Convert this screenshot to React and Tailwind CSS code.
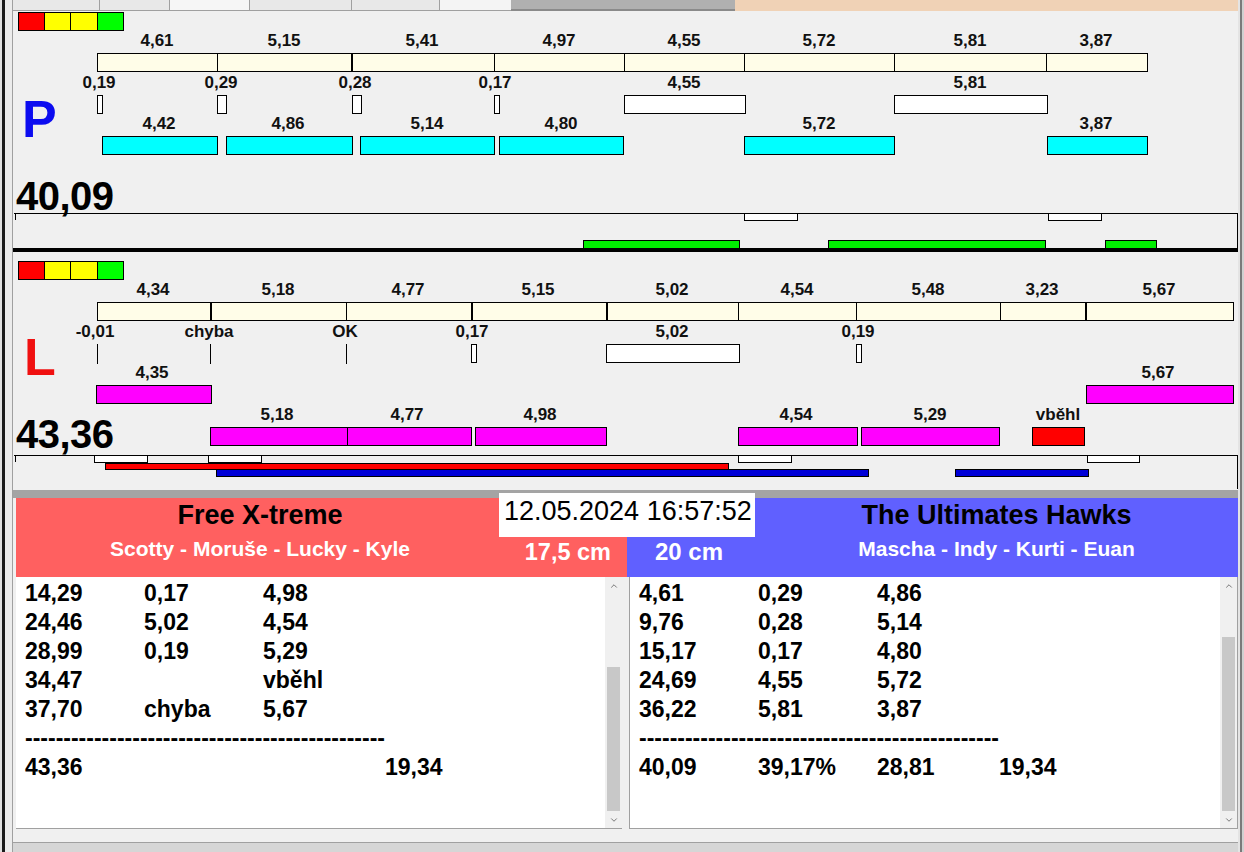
import { ChevronUp, ChevronDown } from "lucide-react";

const X0 = 13;

function Label({ x, y, oy, children }) {
  return (
    <div
      className="absolute -translate-x-1/2 -translate-y-1/2 whitespace-nowrap text-[17px] font-bold leading-none text-[#111]"
      style={{ left: x - X0, top: y - oy }}
    >
      {children}
    </div>
  );
}

function Box({ x0, x1, y0, y1, oy, className = "" }) {
  return (
    <div
      className={"absolute border border-black " + className}
      style={{ left: x0 - X0, top: y0 - oy, width: x1 - x0 + 1, height: y1 - y0 + 1 }}
    />
  );
}

function VLine({ x, y0, y1, oy, w = 1 }) {
  return <div className="absolute bg-black" style={{ left: x - X0, top: y0 - oy, width: w, height: y1 - y0 + 1 }} />;
}

function Squares({ y, oy }) {
  return (
    <>
      <Box x0={18} x1={44} y0={y} y1={y + 18} oy={oy} className="bg-[#ff0000]" />
      <Box x0={44} x1={70} y0={y} y1={y + 18} oy={oy} className="bg-[#ffff00]" />
      <Box x0={70} x1={97} y0={y} y1={y + 18} oy={oy} className="bg-[#ffff00]" />
      <Box x0={97} x1={123} y0={y} y1={y + 18} oy={oy} className="bg-[#00ff00]" />
    </>
  );
}

function TopBar({ x0, x1, y, divs, oy }) {
  return (
    <>
      <Box x0={x0} x1={x1} y0={y} y1={y + 18} oy={oy} className="bg-[#fffde8]" />
      {divs.map(([x, w]) => (
        <VLine key={x} x={x} y0={y} y1={y + 18} oy={oy} w={w} />
      ))}
    </>
  );
}

function BottomBox({ y0, y1, oy }) {
  return (
    <>
      <div
        className="absolute border-t border-r border-black"
        style={{ left: 14 - X0, top: y0 - oy, width: 1224, height: y1 - y0 }}
      />
      <div className="absolute w-px h-[7px] bg-black" style={{ left: 15 - X0, top: y0 - oy }} />
    </>
  );
}

// ---------- panel P ----------
const P = {
  oy: 11,
  top: [[157, "4,61"], [284, "5,15"], [422, "5,41"], [559, "4,97"], [684, "4,55"], [819, "5,72"], [970, "5,81"], [1096, "3,87"]],
  divs: [[217, 1], [351, 2], [494, 1], [624, 1], [744, 1], [894, 1], [1046, 1]],
  row2: [[99, "0,19"], [221, "0,29"], [355, "0,28"], [495, "0,17"], [684, "4,55"], [970, "5,81"]],
  rects2: [[97, 102], [217, 226], [352, 361], [494, 499], [624, 745], [894, 1047]],
  row3: [[159, "4,42"], [288, "4,86"], [427, "5,14"], [561, "4,80"], [819, "5,72"], [1096, "3,87"]],
  cyan: [[102, 217], [226, 352], [360, 494], [499, 623], [744, 894], [1047, 1147]],
  whites: [[744, 797], [1048, 1101]],
  greens: [[583, 739], [828, 1045], [1105, 1156]],
};

function PanelP() {
  const oy = P.oy;
  return (
    <div className="relative h-[237px] bg-[#f0f0f0]">
      <Squares y={12} oy={oy} />
      {P.top.map(([x, t]) => <Label key={"t" + x} x={x} y={40} oy={oy}>{t}</Label>)}
      <TopBar x0={97} x1={1147} y={53} divs={P.divs} oy={oy} />
      {P.row2.map(([x, t]) => <Label key={"r" + x} x={x} y={82} oy={oy}>{t}</Label>)}
      {P.rects2.map(([a, b]) => <Box key={"w" + a} x0={a} x1={b} y0={95} y1={113} oy={oy} className="bg-white" />)}
      {P.row3.map(([x, t]) => <Label key={"c" + x} x={x} y={123} oy={oy}>{t}</Label>)}
      {P.cyan.map(([a, b]) => <Box key={"cy" + a} x0={a} x1={b} y0={136} y1={154} oy={oy} className="bg-[#00ffff]" />)}
      <div className="absolute left-[9px] top-[82px] text-[52px] font-bold leading-none text-[#0c0cf0]">P</div>
      <div className="absolute left-[3px] top-[165px] text-[40px] font-bold leading-none tracking-[-0.5px] text-black">40,09</div>
      <BottomBox y0={213} y1={248} oy={oy} />
      {P.whites.map(([a, b]) => <Box key={"bw" + a} x0={a} x1={b} y0={213} y1={220} oy={oy} className="bg-white" />)}
      {P.greens.map(([a, b]) => <Box key={"g" + a} x0={a} x1={b} y0={240} y1={248} oy={oy} className="bg-[#00ee00] border-[#1a8a1a]" />)}
    </div>
  );
}

// ---------- panel L ----------
const L = {
  oy: 252,
  top: [[153, "4,34"], [278, "5,18"], [408, "4,77"], [538, "5,15"], [672, "5,02"], [797, "4,54"], [928, "5,48"], [1042, "3,23"], [1159, "5,67"]],
  divs: [[210, 2], [346, 1], [471, 2], [606, 2], [738, 1], [856, 1], [1000, 1], [1085, 2]],
  row2: [[95, "-0,01"], [209, "chyba"], [345, "OK"], [472, "0,17"], [672, "5,02"], [858, "0,19"]],
  ticks: [97, 210, 346],
  rects2: [[471, 476], [606, 739], [856, 861]],
  row3: [[152, "4,35"], [1158, "5,67"]],
  mag3: [[96, 211], [1086, 1233]],
  row4: [[277, "5,18"], [407, "4,77"], [540, "4,98"], [796, "4,54"], [930, "5,29"], [1058, "vběhl"]],
  mag4: [[210, 347], [347, 471], [475, 606], [738, 857], [861, 999]],
  whites: [[94, 147], [208, 261], [738, 791], [1087, 1139]],
};

function PanelL() {
  const oy = L.oy;
  return (
    <div className="relative h-[238px] bg-[#f0f0f0]">
      <Squares y={261} oy={oy} />
      {L.top.map(([x, t]) => <Label key={"t" + x} x={x} y={289} oy={oy}>{t}</Label>)}
      <TopBar x0={97} x1={1233} y={302} divs={L.divs} oy={oy} />
      {L.row2.map(([x, t]) => <Label key={"r" + x} x={x} y={331} oy={oy}>{t}</Label>)}
      {L.ticks.map((x) => <VLine key={"k" + x} x={x} y0={344} y1={363} oy={oy} />)}
      {L.rects2.map(([a, b]) => <Box key={"w" + a} x0={a} x1={b} y0={344} y1={362} oy={oy} className="bg-white" />)}
      {L.row3.map(([x, t]) => <Label key={"c" + x} x={x} y={372} oy={oy}>{t}</Label>)}
      {L.mag3.map(([a, b]) => <Box key={"m3" + a} x0={a} x1={b} y0={385} y1={403} oy={oy} className="bg-[#ff00ff]" />)}
      {L.row4.map(([x, t]) => <Label key={"d" + x} x={x} y={414} oy={oy}>{t}</Label>)}
      {L.mag4.map(([a, b]) => <Box key={"m4" + a} x0={a} x1={b} y0={427} y1={445} oy={oy} className="bg-[#ff00ff]" />)}
      <Box x0={1032} x1={1084} y0={427} y1={445} oy={oy} className="bg-[#ff0000]" />
      <div className="absolute left-[11px] top-[79px] text-[52px] font-bold leading-none text-[#f01010]">L</div>
      <div className="absolute left-[3px] top-[162px] text-[40px] font-bold leading-none tracking-[-0.5px] text-black">43,36</div>
      <BottomBox y0={455} y1={489} oy={oy} />
      {L.whites.map(([a, b]) => <Box key={"bw" + a} x0={a} x1={b} y0={455} y1={462} oy={oy} className="bg-white" />)}
      <Box x0={105} x1={728} y0={463} y1={469} oy={oy} className="bg-[#ff0000] border-[#900000]" />
      <Box x0={216} x1={868} y0={469} y1={476} oy={oy} className="bg-[#0000d8] border-[#000080]" />
      <Box x0={955} x1={1088} y0={469} y1={476} oy={oy} className="bg-[#0000d8] border-[#000080]" />
    </div>
  );
}

// ---------- lists ----------
function ScrollBar({ thumbTop }) {
  return (
    <div className="relative w-[17px] h-full bg-[#f0f0f0]">
      <div className="h-[17px] flex items-center justify-center text-[#606060]">
        <ChevronUp size={10} strokeWidth={2} />
      </div>
      <div className="absolute left-[2px] right-[2px] bottom-[17px] bg-[#c8c8c8]" style={{ top: thumbTop }} />
      <div className="absolute bottom-0 left-0 h-[17px] w-[17px] flex items-center justify-center text-[#606060]">
        <ChevronDown size={10} strokeWidth={2} />
      </div>
    </div>
  );
}

const DASHES = "-----------------------------------------------";

function List({ rows, total, thumbTop, width }) {
  return (
    <div className="flex h-full bg-white border-b border-[#a0a0a0]" style={{ width }}>
      <div className="flex-1 pl-[9px] pt-[2px] text-[23px] font-bold leading-[29px] text-black">
        <div className="grid grid-cols-[119px_119px_122px_auto]">
          {rows.map((r, i) => r.map((c, j) => <div key={i + "-" + j} className="whitespace-nowrap">{c}</div>))}
          <div className="col-span-4 whitespace-nowrap">{DASHES}</div>
          {total.map((c, j) => <div key={"t" + j} className="whitespace-nowrap">{c}</div>)}
        </div>
      </div>
      <ScrollBar thumbTop={thumbTop} />
    </div>
  );
}

const leftRows = [
  ["14,29", "0,17", "4,98", ""],
  ["24,46", "5,02", "4,54", ""],
  ["28,99", "0,19", "5,29", ""],
  ["34,47", "", "vběhl", ""],
  ["37,70", "chyba", "5,67", ""],
];
const rightRows = [
  ["4,61", "0,29", "4,86", ""],
  ["9,76", "0,28", "5,14", ""],
  ["15,17", "0,17", "4,80", ""],
  ["24,69", "4,55", "5,72", ""],
  ["36,22", "5,81", "3,87", ""],
];

export default function App() {
  return (
    <div className="w-[1244px] h-[852px] flex overflow-hidden bg-[#f0f0f0] font-['Liberation_Sans',Arial,sans-serif]">
      {/* left window edge */}
      <div className="w-[13px] h-full flex">
        <div className="w-[2px] bg-[#e0e0e0]" />
        <div className="w-[3px] bg-[#1a1a1a]" />
        <div className="w-[7px] bg-[#ececec]" />
        <div className="w-px bg-[#a0a0a0]" />
      </div>

      <div className="w-[1225px] flex flex-col">
        {/* tab strip */}
        <div className="h-[11px] flex">
          <div className="w-[87px] bg-[#e8e8e8] border-r border-b border-[#a0a0a0]" />
          <div className="w-[70px] bg-[#e8e8e8] border-r border-b border-[#a0a0a0]" />
          <div className="w-[80px] bg-[#f6f6f6] border-r border-b border-[#a0a0a0]" />
          <div className="w-[102px] bg-[#e8e8e8] border-r border-b border-[#a0a0a0]" />
          <div className="w-[88px] bg-[#e8e8e8] border-r border-b border-[#a0a0a0]" />
          <div className="w-[71px] bg-[#f4f4f4] border-b border-[#a0a0a0]" />
          <div className="w-[224px] bg-[#b0b0b0] border-b-2 border-[#8a8a8a]" />
          <div className="flex-1 bg-[#f0d2b6]" />
        </div>

        <PanelP />
        <div className="h-[4px] bg-black" />
        <PanelL />

        {/* team headers */}
        <div className="relative">
          <div className="h-[8px] bg-[#a4a4a4]" />
          <div className="h-[79px] flex pl-[3px]">
            <div className="w-[611px] flex bg-[#ff6060]">
              <div className="w-[488px] flex flex-col items-center pt-[2px]">
                <div className="text-[27px] font-bold leading-[30px] text-black">Free X-treme</div>
                <div className="mt-[7px] text-[21px] font-bold leading-[24px] text-white">Scotty - Moruše - Lucky - Kyle</div>
              </div>
              <div className="flex-1 flex justify-end pr-[16px] pt-[40px]">
                <div className="text-[23.5px] font-bold leading-[28px] text-white whitespace-nowrap">17,5 cm</div>
              </div>
            </div>
            <div className="flex-1 flex bg-[#6060ff]">
              <div className="w-[128px] pl-[28px] pt-[40px]">
                <div className="text-[24px] font-bold leading-[28px] text-white whitespace-nowrap">20 cm</div>
              </div>
              <div className="flex-1 flex flex-col items-center pt-[2px]">
                <div className="text-[27px] font-bold leading-[30px] text-black">The Ultimates Hawks</div>
                <div className="mt-[7px] text-[21px] font-bold leading-[24px] text-white">Mascha - Indy - Kurti - Euan</div>
              </div>
            </div>
          </div>
          <div className="absolute left-[486px] top-[3px] w-[256px] h-[44px] bg-white pl-[5px]">
            <div className="text-[27px] leading-[36px] text-black whitespace-nowrap">12.05.2024 16:57:52</div>
          </div>
        </div>

        {/* result lists */}
        <div className="h-[252px] flex pl-[3px]">
          <List rows={leftRows} total={["43,36", "", "", "19,34"]} thumbTop={90} width={606} />
          <div className="w-[8px] h-full bg-[#f0f0f0] border-r border-[#a0a0a0]" />
          <List rows={rightRows} total={["40,09", "39,17%", "28,81", "19,34"]} thumbTop={60} width={607} />
          <div className="w-px h-full bg-[#a0a0a0]" />
        </div>

        {/* status strip */}
        <div className="h-[13px] bg-[#f0f0f0]" />
        <div className="h-px bg-[#a0a0a0]" />
        <div className="flex-1 bg-[#d6d6d6]" />
      </div>

      {/* right window edge */}
      <div className="w-[6px] h-full flex">
        <div className="w-[2px] bg-[#e4e4e4]" />
        <div className="w-[2px] bg-[#7a7a7a]" />
        <div className="w-[2px] bg-[#d0d0d0]" />
      </div>
    </div>
  );
}
